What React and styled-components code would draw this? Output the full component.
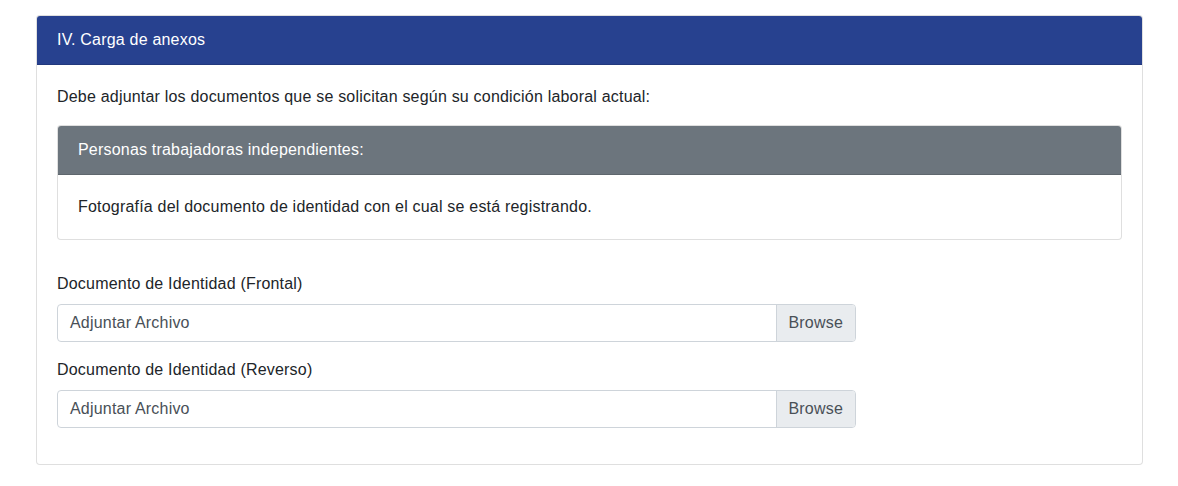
import styled, { createGlobalStyle } from 'styled-components';

const GlobalStyle = createGlobalStyle`
  body {
    margin: 0;
    background: #fff;
    font-family: "Liberation Sans", Arial, sans-serif;
    font-size: 16px;
    line-height: 1.5;
    letter-spacing: 0.2px;
    color: #212529;
  }
  * { box-sizing: border-box; }
`;

// 페이지 영역
const Page = styled.div`
  padding: 15px 35px 15px 36px;
`;

// 카드
const Card = styled.div`
  display: flex;
  flex-direction: column;
  background: #fff;
  border: 1px solid rgba(0, 0, 0, 0.125);
  border-radius: 4px;
  overflow: hidden;
`;

const CardHeader = styled.div`
  padding: 12px 20px;
  background: ${(p) => p.$bg};
  color: #fff;
  border-bottom: 1px solid rgba(0, 0, 0, 0.125);
`;

const CardBody = styled.div`
  padding: 20px;
`;

const Text = styled.p`
  margin: 0 0 ${(p) => p.$mb || 0}px;
`;

const FormGroup = styled.div`
  width: 75%;
  margin-top: ${(p) => p.$mt || 0}px;
  margin-bottom: 16px;
`;

const Label = styled.label`
  display: block;
  margin-bottom: 8px;
`;

const FileInput = styled.div`
  display: flex;
  height: 38px;
  border: 1px solid #ced4da;
  border-radius: 4px;
  overflow: hidden;
  color: #495057;
`;

const FileName = styled.div`
  flex: 1;
  padding: 6px 12px;
`;

const BrowseButton = styled.div`
  width: 79px;
  padding: 6px 0;
  text-align: center;
  background: #e9ecef;
  border-left: 1px solid #ced4da;
`;

function FileField({ label, mt }) {
  return (
    <FormGroup $mt={mt}>
      <Label>{label}</Label>
      <FileInput>
        <FileName>Adjuntar Archivo</FileName>
        <BrowseButton>Browse</BrowseButton>
      </FileInput>
    </FormGroup>
  );
}

export default function App() {
  return (
    <Page>
      <GlobalStyle />
      <Card>
        <CardHeader $bg="#27418f">IV. Carga de anexos</CardHeader>
        <CardBody>
          <Text $mb={16}>Debe adjuntar los documentos que se solicitan según su condición laboral actual:</Text>
          <Card>
            <CardHeader $bg="#6c757d">Personas trabajadoras independientes:</CardHeader>
            <CardBody>
              <Text>Fotografía del documento de identidad con el cual se está registrando.</Text>
            </CardBody>
          </Card>
          <FileField label="Documento de Identidad (Frontal)" mt={32} />
          <FileField label="Documento de Identidad (Reverso)" />
        </CardBody>
      </Card>
    </Page>
  );
}
